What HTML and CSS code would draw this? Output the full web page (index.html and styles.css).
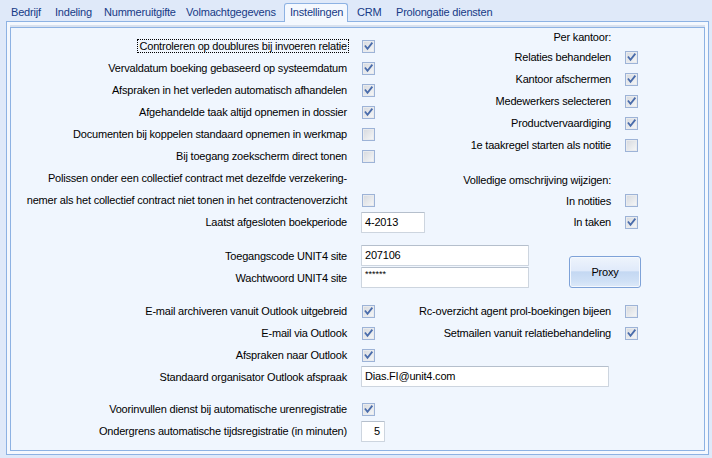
FILE: index.html
```html
<!DOCTYPE html>
<html lang="nl">
<head>
<meta charset="utf-8">
<title>Instellingen</title>
<link rel="stylesheet" href="styles.css">
</head>
<body>
<div class="window">
  <div class="tabs">
    <div class="tab tab-bedrijf">Bedrijf</div>
    <div class="tab tab-indeling">Indeling</div>
    <div class="tab tab-nummer">Nummeruitgifte</div>
    <div class="tab tab-volmacht">Volmachtgegevens</div>
    <div class="tab tab-inst active">Instellingen</div>
    <div class="tab tab-crm">CRM</div>
    <div class="tab tab-prol">Prolongatie diensten</div>
  </div>
  <div class="panel">
    <div class="inner">
      <div class="section top">
        <div class="col-left top-left">
          <div class="row"><span class="lbl"><span class="focus">Controleren op doublures bij invoeren relatie</span></span><span class="cb on"><svg viewBox="0 0 11 11"><path d="M2.5 5.2 L4.5 7.8 L8.8 2.3"/></svg></span></div>
          <div class="row"><span class="lbl">Vervaldatum boeking gebaseerd op systeemdatum</span><span class="cb on"><svg viewBox="0 0 11 11"><path d="M2.5 5.2 L4.5 7.8 L8.8 2.3"/></svg></span></div>
          <div class="row"><span class="lbl">Afspraken in het verleden automatisch afhandelen</span><span class="cb on"><svg viewBox="0 0 11 11"><path d="M2.5 5.2 L4.5 7.8 L8.8 2.3"/></svg></span></div>
          <div class="row"><span class="lbl">Afgehandelde taak altijd opnemen in dossier</span><span class="cb on"><svg viewBox="0 0 11 11"><path d="M2.5 5.2 L4.5 7.8 L8.8 2.3"/></svg></span></div>
          <div class="row"><span class="lbl">Documenten bij koppelen standaard opnemen in werkmap</span><span class="cb"></span></div>
          <div class="row"><span class="lbl">Bij toegang zoekscherm direct tonen</span><span class="cb"></span></div>
          <div class="row"><span class="lbl">Polissen onder een collectief contract met dezelfde verzekering-</span></div>
          <div class="row"><span class="lbl">nemer als het collectief contract niet tonen in het contractenoverzicht</span><span class="cb"></span></div>
          <div class="row"><span class="lbl">Laatst afgesloten boekperiode</span><span class="tb tb-period">4-2013</span></div>
        </div>
        <div class="col-right">
          <div class="row r-head"><span class="lbl">Per kantoor:</span><span class="cb-space"></span></div>
          <div class="row"><span class="lbl">Relaties behandelen</span><span class="cb on"><svg viewBox="0 0 11 11"><path d="M2.5 5.2 L4.5 7.8 L8.8 2.3"/></svg></span></div>
          <div class="row"><span class="lbl">Kantoor afschermen</span><span class="cb on"><svg viewBox="0 0 11 11"><path d="M2.5 5.2 L4.5 7.8 L8.8 2.3"/></svg></span></div>
          <div class="row"><span class="lbl">Medewerkers selecteren</span><span class="cb on"><svg viewBox="0 0 11 11"><path d="M2.5 5.2 L4.5 7.8 L8.8 2.3"/></svg></span></div>
          <div class="row"><span class="lbl">Productvervaardiging</span><span class="cb on"><svg viewBox="0 0 11 11"><path d="M2.5 5.2 L4.5 7.8 L8.8 2.3"/></svg></span></div>
          <div class="row"><span class="lbl">1e taakregel starten als notitie</span><span class="cb"></span></div>
          <div class="row r-sub"><span class="lbl">Volledige omschrijving wijzigen:</span><span class="cb-space"></span></div>
          <div class="row r-mid"><span class="lbl">In notities</span><span class="cb"></span></div>
          <div class="row"><span class="lbl">In taken</span><span class="cb on"><svg viewBox="0 0 11 11"><path d="M2.5 5.2 L4.5 7.8 L8.8 2.3"/></svg></span></div>
        </div>
      </div>

      <div class="section site">
        <div class="site-fields">
          <div class="row r-field"><span class="lbl">Toegangscode UNIT4 site</span><span class="tb tb-site">207106</span></div>
          <div class="row r-field"><span class="lbl">Wachtwoord UNIT4 site</span><span class="tb tb-site pw">******</span></div>
        </div>
        <div class="btn">Proxy</div>
      </div>

      <div class="section outlook">
        <div class="col-left outlook-left">
          <div class="row"><span class="lbl">E-mail archiveren vanuit Outlook uitgebreid</span><span class="cb on"><svg viewBox="0 0 11 11"><path d="M2.5 5.2 L4.5 7.8 L8.8 2.3"/></svg></span></div>
          <div class="row"><span class="lbl">E-mail via Outlook</span><span class="cb on"><svg viewBox="0 0 11 11"><path d="M2.5 5.2 L4.5 7.8 L8.8 2.3"/></svg></span></div>
          <div class="row"><span class="lbl">Afspraken naar Outlook</span><span class="cb on"><svg viewBox="0 0 11 11"><path d="M2.5 5.2 L4.5 7.8 L8.8 2.3"/></svg></span></div>
        </div>
        <div class="col-right">
          <div class="row"><span class="lbl">Rc-overzicht agent prol-boekingen bijeen</span><span class="cb"></span></div>
          <div class="row"><span class="lbl">Setmailen vanuit relatiebehandeling</span><span class="cb on"><svg viewBox="0 0 11 11"><path d="M2.5 5.2 L4.5 7.8 L8.8 2.3"/></svg></span></div>
        </div>
      </div>
      <div class="row r-field"><span class="lbl">Standaard organisator Outlook afspraak</span><span class="tb tb-mail">Dias.FI@unit4.com</span></div>

      <div class="section uren">
        <div class="row"><span class="lbl">Voorinvullen dienst bij automatische urenregistratie</span><span class="cb on"><svg viewBox="0 0 11 11"><path d="M2.5 5.2 L4.5 7.8 L8.8 2.3"/></svg></span></div>
        <div class="row"><span class="lbl">Ondergrens automatische tijdsregistratie (in minuten)</span><span class="tb tb-num">5</span></div>
      </div>
    </div>
  </div>
</div>
</body>
</html>
```
FILE: styles.css
```css
html, body {
  margin: 0;
  padding: 0;
}
body {
  background: #dfe9f9;
  font-family: "Liberation Sans", Arial, sans-serif;
  font-size: 11px;
  letter-spacing: -0.2px;
  color: #000;
}
.window {
  width: 712px;
  height: 458px;
  overflow: hidden;
}

/* Tabs */
.tabs {
  display: flex;
  align-items: flex-end;
  height: 21px;
  padding-left: 5px;
  box-sizing: border-box;
}
.tab {
  flex: none;
  height: 18px;
  line-height: 18px;
  padding-left: 6px;
  box-sizing: border-box;
  color: #163a86;
  white-space: nowrap;
}
.tab-bedrijf { width: 44px; }
.tab-indeling { width: 49px; }
.tab-nummer { width: 82px; }
.tab-volmacht { width: 104px; }
.tab-inst { width: 64px; }
.tab-crm { width: 42px; padding-left: 9px; }
.tab-prol { width: auto; }
.tab.active {
  height: 19px;
  line-height: 17px;
  margin-bottom: -1px;
  padding-left: 5px;
  border: 1px solid #8db2e3;
  border-bottom: none;
  border-radius: 3px 3px 0 0;
  background: #f4f8fe;
  position: relative;
  z-index: 1;
}

/* Panel frame */
.panel {
  margin-left: 6px;
  width: 703px;
  height: 434px;
  box-sizing: border-box;
  border: 1px solid #8db2e3;
  background: #f4f8fe;
  padding: 5px 3px 3px 3px;
}
.inner {
  height: 424px;
  box-sizing: border-box;
  border: 1px solid #8db2e3;
  background: #f0f6fe;
  box-shadow: 0 -2px 0 #d8e1ef;
}

/* Layout */
.section {
  display: flex;
}
.row {
  display: flex;
  align-items: center;
  height: 22px;
  white-space: nowrap;
}
.lbl {
  flex: none;
}
.col-left .lbl,
.site-fields .lbl,
.inner > .row .lbl,
.uren .lbl {
  width: 336px;
  text-align: right;
}
.top-left {
  width: 429px;
  padding-top: 7px;
}
.outlook-left {
  width: 379px;
}
.col-right {
  flex: 1;
  padding-right: 66px;
}
.col-right .row {
  justify-content: flex-end;
}
.r-head { height: 18px; }
.r-sub { height: 20px; margin-top: 14px; }
.r-mid { height: 21px; }

.focus {
  outline: 1px dotted #000;
  outline-offset: 0;
  padding: 0 1px 0 2px;
  margin-right: -1px;
}

/* Checkbox */
.cb, .cb-space {
  flex: none;
  width: 13px;
  height: 13px;
  box-sizing: border-box;
  margin-left: 15px;
}
.col-right .cb, .col-right .cb-space {
  margin-left: 14px;
}
.cb {
  border: 1px solid #9db3d7;
  background: linear-gradient(135deg, #d6d9de 0%, #e6e8eb 50%, #f7f8f9 100%);
  box-shadow: inset 0 0 0 1px #e9ebee;
}
.cb svg {
  display: block;
  width: 11px;
  height: 11px;
}
.cb svg path {
  fill: none;
  stroke: #4a6cab;
  stroke-width: 1.8;
  stroke-linecap: square;
}

/* Text boxes */
.tb {
  flex: none;
  height: 21px;
  line-height: 19px;
  box-sizing: border-box;
  margin-left: 14px;
  padding: 0 3px;
  background: #fff;
  border: 1px solid #cdd5df;
  border-top-color: #b5bfcc;
  border-radius: 1px;
}
.tb-period { width: 64px; }
.tb-site { width: 168px; }
.tb-mail { width: 248px; }
.tb-num { width: 24px; text-align: right; padding-right: 4px; }
.pw {
  font-size: 9px;
  line-height: 13px;
  letter-spacing: 0;
}

/* Site section */
.site {
  margin-top: 12px;
}
.site-fields {
  display: flex;
  flex-direction: column;
  gap: 1px;
}
.r-field {
  height: 21px;
}
.btn {
  align-self: flex-end;
  flex: none;
  width: 72px;
  height: 32px;
  margin-left: 40px;
  box-sizing: border-box;
  border: 1px solid #7ea2d8;
  border-radius: 3px;
  background: linear-gradient(to bottom, #eef4fc 0%, #e0eafa 45%, #c4d8f2 50%, #cfe0f6 80%, #dde9f9 100%);
  box-shadow: inset 0 0 0 1px #f4f8fe;
  display: flex;
  align-items: center;
  justify-content: center;
}

/* Outlook section */
.outlook {
  margin-top: 12px;
}
.uren {
  margin-top: 11px;
  flex-direction: column;
}
```
